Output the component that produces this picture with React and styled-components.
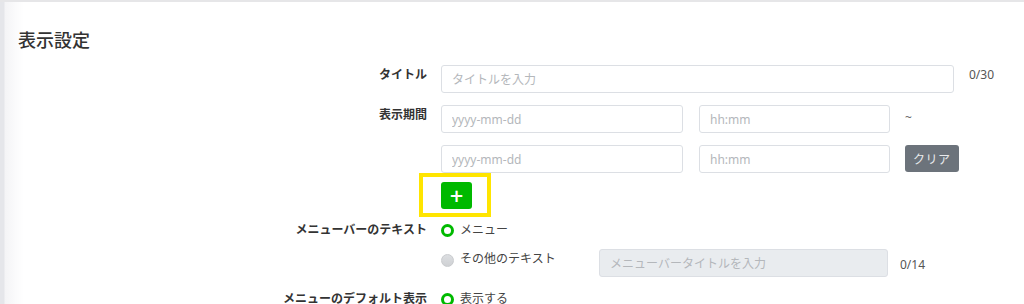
import React from 'react'
import styled, { createGlobalStyle } from 'styled-components'

const GlobalStyle = createGlobalStyle`
  html, body {
    margin: 0;
    padding: 0;
    background: #fff;
  }
  body {
    font-family: "Noto Sans", "Noto Sans CJK JP", sans-serif;
    color: #333;
  }
`

function App() {
  return (
    <>
      <GlobalStyle />
      <Page>
        <Heading>表示設定</Heading>

        <FieldRow>
          <Label>タイトル</Label>
          <Controls>
            <Line>
              <TextInput width={513} placeholder="タイトルを入力" />
              <Counter>0/30</Counter>
            </Line>
          </Controls>
        </FieldRow>

        <FieldRow top={12}>
          <Label>表示期間</Label>
          <Controls>
            <Line>
              <TextInput width={242} placeholder="yyyy-mm-dd" />
              <TextInput width={191} gap={16} placeholder="hh:mm" />
              <Tilde>~</Tilde>
            </Line>
            <Line>
              <TextInput width={242} placeholder="yyyy-mm-dd" />
              <TextInput width={191} gap={16} placeholder="hh:mm" />
              <ClearButton>クリア</ClearButton>
            </Line>
            <AddWrap>
              <AddButton>+</AddButton>
            </AddWrap>
          </Controls>
        </FieldRow>

        <FieldRow top={11}>
          <Label>メニューバーのテキスト</Label>
          <Controls gap={9}>
            <Option>
              <Radio checked />
              <OptionText>メニュー</OptionText>
            </Option>
            <Option>
              <OptionLabel>
                <Radio />
                <OptionText>その他のテキスト</OptionText>
              </OptionLabel>
              <InputGroup>
                <TextInput width={289} disabled placeholder="メニューバータイトルを入力" />
                <SmallCounter>0/14</SmallCounter>
              </InputGroup>
            </Option>
          </Controls>
        </FieldRow>

        <FieldRow top={12}>
          <Label>メニューのデフォルト表示</Label>
          <Controls>
            <Option>
              <Radio checked />
              <OptionText>表示する</OptionText>
            </Option>
          </Controls>
        </FieldRow>
      </Page>
    </>
  )
}

export default App

const Page = styled.div`
  display: flex;
  flex-direction: column;
  height: 302px;
  border-top: 2px solid #e6e6e8;
  background: linear-gradient(to right, #e5e6ea 0, #e5e6ea 4px, #f4f4f6 5px, #fbfbfc 16px, #fff 24px);
  overflow: hidden;
`

const Heading = styled.h2`
  margin: 0 0 13px;
  padding: 26px 0 0 18px;
  font-size: 18px;
  line-height: 24px;
  font-weight: 500;
  color: #333;
`

const FieldRow = styled.div`
  display: grid;
  grid-template-columns: 427px 1fr;
  column-gap: 14px;
  flex-shrink: 0;
  margin-top: ${p => p.top || 0}px;
`

const Label = styled.div`
  text-align: right;
  font-size: 12px;
  font-weight: 700;
  line-height: 20px;
  color: #333;
  white-space: nowrap;
`

const Controls = styled.div`
  display: flex;
  flex-direction: column;
  gap: ${p => p.gap ?? 12}px;
`

const Line = styled.div`
  display: flex;
  align-items: flex-start;
`

const TextInput = styled.input`
  box-sizing: border-box;
  width: ${p => p.width}px;
  height: 28px;
  margin: 0 0 0 ${p => p.gap || 0}px;
  padding: 0 10px;
  border: 1px solid #dcdfe4;
  border-radius: 3px;
  background: ${p => (p.disabled ? '#e9ecef' : '#fff')};
  font-family: "Noto Sans", "Noto Sans CJK JP", sans-serif;
  font-size: 12px;
  color: #333;
  outline: none;

  &::placeholder {
    color: #b4b7bb;
  }
`

const Counter = styled.span`
  margin-left: 15px;
  font-size: 12px;
  line-height: 20px;
  color: #555;
`

const SmallCounter = styled(Counter)`
  margin-left: 12px;
  padding-top: 4px;
`

const Tilde = styled.span`
  margin-left: 15px;
  font-size: 12px;
  line-height: 26px;
  color: #666;
`

const ClearButton = styled.button`
  height: 27px;
  margin-left: 15px;
  padding: 0 8px;
  border: none;
  border-radius: 3px;
  background: #6c737b;
  color: #e8eaec;
  font-family: "Noto Sans", "Noto Sans CJK JP", sans-serif;
  font-size: 12px;
  letter-spacing: 0.5px;
`

const AddWrap = styled.div`
  position: relative;
  margin-top: -3px;
  width: 31px;
  height: 27px;

  &::after {
    content: '';
    position: absolute;
    left: -22px;
    top: -9px;
    width: 72px;
    height: 44px;
    box-sizing: border-box;
    border: 4px solid #ffe500;
    pointer-events: none;
  }
`

const AddButton = styled.button`
  width: 31px;
  height: 27px;
  padding: 0;
  border: none;
  border-radius: 3px;
  background: #00b900;
  color: #fff;
  font-family: "DejaVu Sans", sans-serif;
  font-size: 18px;
  font-weight: 700;
  line-height: 27px;
`

const Option = styled.div`
  display: flex;
  align-items: flex-start;
`

const OptionLabel = styled.div`
  display: flex;
  align-items: center;
  width: 158px;
  height: 20px;
`

const InputGroup = styled.div`
  display: flex;
  align-items: center;
`

const Radio = styled.span`
  box-sizing: border-box;
  display: inline-block;
  flex-shrink: 0;
  width: 13px;
  height: 13px;
  margin-top: 3.5px;
  border-radius: 50%;
  border: ${p => (p.checked ? '3.5px solid #00b900' : '1px solid #c9cbce')};
  background: ${p => (p.checked ? '#fff' : 'linear-gradient(#dcdee1, #cfd1d4)')};
`

const OptionText = styled.span`
  margin-left: 6px;
  font-size: 12px;
  line-height: 20px;
  color: #444;
`
